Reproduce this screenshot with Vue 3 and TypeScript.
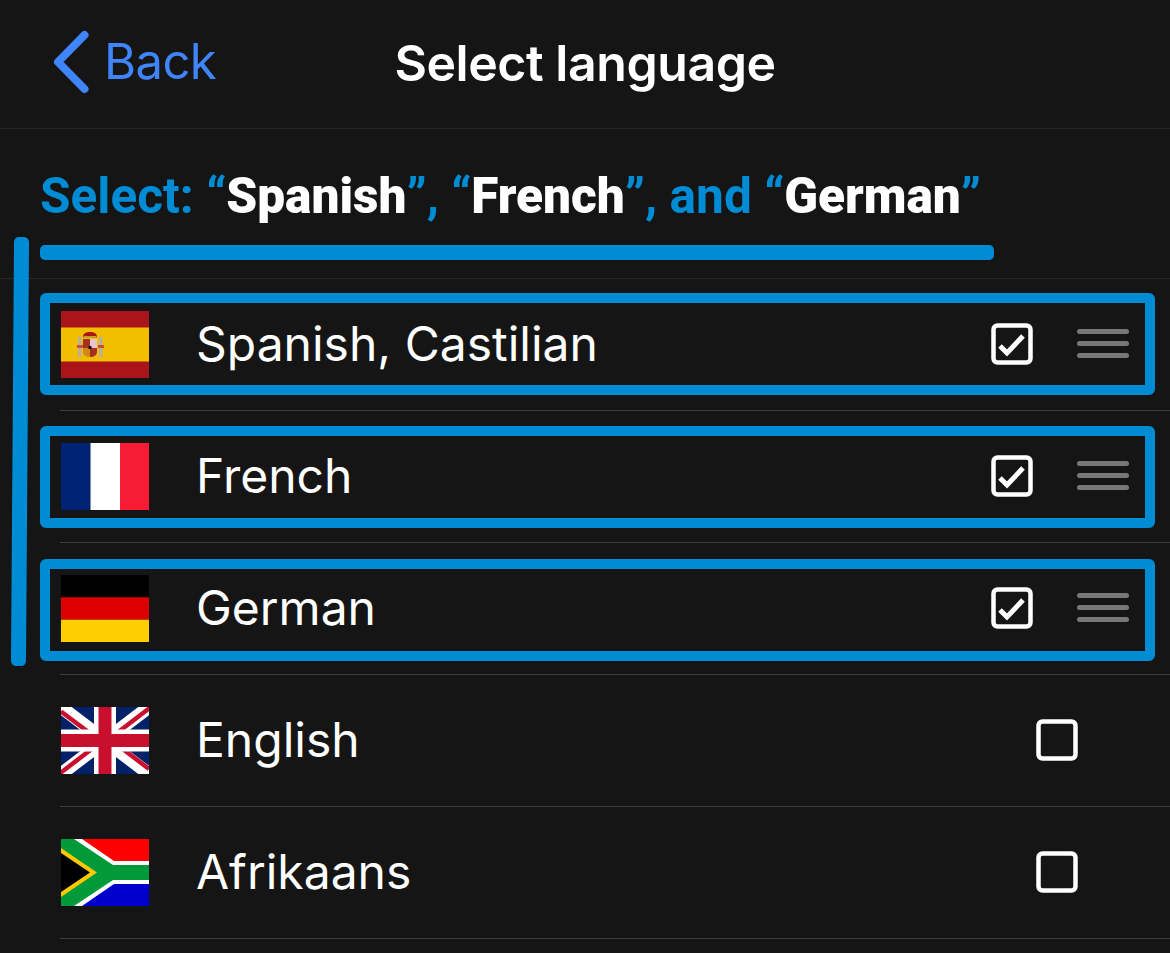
<script setup lang="ts">
interface Lang { name: string; flag: string; selected: boolean }
const langs: Lang[] = [
  { name: 'Spanish, Castilian', flag: 'es', selected: true },
  { name: 'French', flag: 'fr', selected: true },
  { name: 'German', flag: 'de', selected: true },
  { name: 'English', flag: 'gb', selected: false },
  { name: 'Afrikaans', flag: 'za', selected: false },
]
</script>

<template>
  <div class="page">
    <header class="nav">
      <button class="back" type="button">
        <svg class="chev" width="36" height="64" viewBox="0 0 36 64">
          <path d="M31.5 5 5 32l26.500 27" fill="none" stroke="#3f84f8" stroke-width="8" stroke-linecap="round" stroke-linejoin="round" />
        </svg>
        <span>Back</span>
      </button>
      <h1 class="title">Select language</h1>
    </header>

    <section class="prompt">
      <p class="ask">Select: “<b>Spanish</b>”, “<b>French</b>”, and “<b>German</b>”</p>
      <div class="rule"></div>
    </section>

    <ul class="list">
      <li v-for="l in langs" :key="l.name" class="row">
        <div class="row-in">
          <svg v-if="l.flag === 'es'" class="flag" viewBox="0 0 88 67" preserveAspectRatio="none">
            <rect width="88" height="67" fill="#aa151b" />
            <rect y="16.500" width="88" height="34" fill="#f1bf00" />
            <rect x="17" y="26" width="3.500" height="20" fill="#b8b09a" />
            <rect x="38" y="26" width="3.500" height="20" fill="#b8b09a" />
            <rect x="16" y="34" width="6" height="3" fill="#c8503a" />
            <rect x="37" y="34" width="6" height="3" fill="#c8503a" />
            <path d="M22 25c1-3 3-4 7-4s6 1 7 4l-1 2H23z" fill="#ad1519" />
            <path d="M23 25h12v2H23z" fill="#c8a020" />
            <path d="M22 28h7v9h-7z" fill="#a8301f" />
            <path d="M29 28h7v9h-7z" fill="#e9c6cf" />
            <path d="M22 37h7v9c-4 0-7-2-7-5z" fill="#d08a15" />
            <path d="M29 37h7v4c0 3-3 5-7 5z" fill="#a8301f" />
            <rect x="27.500" y="35" width="3" height="3" fill="#111" />
          </svg>
          <svg v-else-if="l.flag === 'fr'" class="flag" viewBox="0 0 88 67" preserveAspectRatio="none">
            <rect width="29.500" height="67" fill="#002376" />
            <rect x="29.500" width="29.500" height="67" fill="#fff" />
            <rect x="59" width="29" height="67" fill="#f71b34" />
          </svg>
          <svg v-else-if="l.flag === 'de'" class="flag" viewBox="0 0 88 67" preserveAspectRatio="none">
            <rect width="88" height="22.300" fill="#000" />
            <rect y="22.300" width="88" height="22.400" fill="#dd0000" />
            <rect y="44.700" width="88" height="22.300" fill="#ffce00" />
          </svg>
          <svg v-else-if="l.flag === 'gb'" class="flag" viewBox="0 0 88 67" preserveAspectRatio="none">
            <rect width="88" height="67" fill="#012169" />
            <path d="M0 0 88 67M88 0 0 67" stroke="#fff" stroke-width="13" />
            <path d="M0 4.500 38 33M90 0 52 29M88 62 50 33M-2 67 36 38" stroke="#c8102e" stroke-width="4.500" />
            <path d="M44 0v67M0 33.500h88" stroke="#fff" stroke-width="22" />
            <path d="M44 0v67M0 33.500h88" stroke="#c8102e" stroke-width="13" />
          </svg>
          <svg v-else class="flag" viewBox="0 0 88 67" preserveAspectRatio="none">
            <rect width="88" height="33.500" fill="#ff0000" />
            <rect y="33.500" width="88" height="33.500" fill="#0000cc" />
            <path d="M0 0H21L53 22H88V45H53L21 67H0Z" fill="#fff" />
            <path d="M0 0H13L52 26H88V41H52L13 67H0Z" fill="#009a3a" />
            <path d="M0 9 36 33.500 0 58Z" fill="#ffc800" />
            <path d="M0 14 29 33.500 0 53Z" fill="#000" />
          </svg>
          <span class="name">{{ l.name }}</span>
          <div class="tools">
            <svg v-if="l.selected" class="box on" width="42" height="42" viewBox="0 0 42 42">
              <rect x="2.500" y="2.500" width="37" height="37" rx="4" fill="none" stroke="#fff" stroke-width="4.500" />
              <path d="M9 23 16 30 32 13" fill="none" stroke="#fff" stroke-width="5" />
            </svg>
            <svg v-else class="box" width="42" height="42" viewBox="0 0 42 42">
              <rect x="2.500" y="2.500" width="37" height="37" rx="4" fill="none" stroke="#fff" stroke-width="4.500" />
            </svg>
            <div v-if="l.selected" class="handle"><i></i><i></i><i></i></div>
          </div>
        </div>
        <div v-if="l.selected" class="mark"></div>
      </li>
    </ul>

    <svg class="side" width="20" height="430" viewBox="0 0 20 430">
      <path d="M4 6C4 2 6 0 9 0h4c4 0 6 2 6 6L16 423c0 4-2 6-5 6H7c-4 0-6-2-6-6Z" fill="#008cd4" />
    </svg>
  </div>
</template>

<style>
html, body { margin: 0; background: #151515; }
</style>

<style scoped>
.page {
  position: relative;
  width: 1170px;
  height: 953px;
  overflow: hidden;
  background: #151515;
  color: #fff;
  font-family: Inter, "Liberation Sans", sans-serif;
}
.nav {
  position: relative;
  height: 128px;
  border-bottom: 1px solid #262626;
  display: flex;
  align-items: center;
  justify-content: center;
}
.back {
  position: absolute;
  left: 53px;
  top: 30px;
  display: flex;
  align-items: center;
  gap: 15px;
  padding: 0;
  border: 0;
  background: none;
  color: #3f84f8;
  font: 400 49px/64px Inter, sans-serif;
  letter-spacing: -0.6px;
}
.title {
  margin: 0 0 2px;
  font-size: 50px;
  font-weight: 600;
  line-height: 64px;
  letter-spacing: -0.45px;
}
.prompt {
  height: 150px;
  padding: 36px 0 0 40px;
  box-sizing: border-box;
  border-bottom: 1px solid #262626;
}
.ask {
  margin: 0;
  height: 62px;
  font: 700 49.600px/62px Roboto, sans-serif;
  color: #008cd4;
  white-space: nowrap;
}
.ask b { color: #fff; }
.rule {
  width: 954px;
  height: 15px;
  margin-top: 18px;
  border-radius: 5px;
  background: #008cd4;
}
.list { margin: 0; padding: 0; list-style: none; }
.row {
  position: relative;
  height: 132px;
  box-sizing: border-box;
  padding-left: 60px;
}
.row-in {
  height: 132px;
  box-sizing: border-box;
  padding: 0 41px 0 1px;
  border-bottom: 1px solid #3d3d3d;
  display: flex;
  align-items: center;
}
.flag { width: 88px; height: 67px; flex: none; }
.name {
  margin: 0 0 2px 47px;
  font-size: 48px;
  font-weight: 400;
}
.tools {
  margin: 0 0 2px auto;
  display: flex;
  align-items: center;
  gap: 44px;
}
.box { display: block; }
.handle {
  width: 52px;
  display: flex;
  flex-direction: column;
  gap: 7px;
}
.handle i {
  display: block;
  height: 5px;
  border-radius: 3px;
  background: #777;
}
.row:nth-child(n+4) .tools { margin-right: 51px; }
.mark {
  position: absolute;
  left: 40px;
  top: 14px;
  width: 1115px;
  height: 102px;
  box-sizing: border-box;
  border: 10px solid #008cd4;
  border-radius: 6px;
  pointer-events: none;
}
.row:nth-child(2) .mark { top: 15px; }
.row:nth-child(3) .mark { top: 16px; }
.side {
  position: absolute;
  left: 10px;
  top: 237px;
}
</style>
